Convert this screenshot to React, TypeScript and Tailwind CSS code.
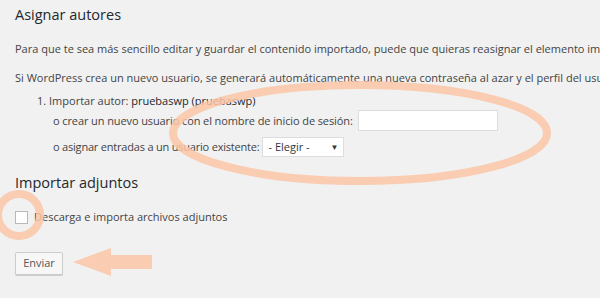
import React from "react";

const font = { fontFamily: '"Open Sans", "Noto Sans", sans-serif' };

function Annotations() {
  return (
    <svg
      className="pointer-events-none absolute inset-0"
      width="600"
      height="298"
      viewBox="0 0 600 298"
    >
      <g opacity="0.85">
        <ellipse cx="360" cy="133" rx="187" ry="48" fill="none" stroke="#fcc6a6" strokeWidth="8" />
        <circle cx="19" cy="215" r="21" fill="none" stroke="#fcc6a6" strokeWidth="8" />
        <path d="M73 262 L111 248 L111 255 L152 255 L152 269 L111 269 L111 276 Z" fill="#fcc6a6" />
      </g>
    </svg>
  );
}

export default function App() {
  return (
    <div
      className="relative h-[298px] w-[600px] overflow-hidden bg-[#f1f1f1] text-[#444]"
      style={font}
    >
      <div className="pl-[15px] pt-[4px]">
        <h2 className="text-[14.5px] leading-[22px] font-normal text-[#23282d]">Asignar autores</h2>

        <p className="mt-[15px] whitespace-nowrap text-[11px] leading-[16px]">
          Para que te sea más sencillo editar y guardar el contenido importado, puede que quieras reasignar el elemento importado a un usuario existente.
        </p>
        <p className="mt-[13px] whitespace-nowrap text-[11px] leading-[16px]">
          Si WordPress crea un nuevo usuario, se generará automáticamente una nueva contraseña al azar y el perfil del usuario se configurará como suscriptor.
        </p>

        <ol className="mt-[7px] pl-[22px] text-[11px]">
          <li className="leading-[16px]">
            1. Importar autor: <span className="text-[#23282d]">pruebaswp (pruebaswp)</span>
            <div className="flex flex-col pl-[16px]">
              <div className="flex h-[23px] items-center gap-[5px]">
                <span className="tracking-[-0.1px]">o crear un nuevo usuario con el nombre de inicio de sesión:</span>
                <span className="h-[21px] w-[140px] border border-[#ddd] bg-white" />
              </div>
              <div className="mt-[4px] flex h-[21px] items-center gap-[3px]">
                <span className="tracking-[-0.2px]">o asignar entradas a un usuario existente:</span>
                <span className="flex h-[20px] w-[82px] items-center justify-between border border-[#ddd] bg-white pl-[5px] pr-[5px] text-[11px] text-[#32373c]">
                  - Elegir -<span className="text-[8px]">▼</span>
                </span>
              </div>
            </div>
          </li>
        </ol>

        <h2 className="mt-[15px] text-[14.5px] leading-[22px] font-normal text-[#23282d]">Importar adjuntos</h2>

        <label className="mt-[15px] flex items-center gap-[6px] text-[11px] leading-[16px]">
          <span className="h-[13px] w-[13px] border border-[#b4b9be] bg-white" />
          Descarga e importa archivos adjuntos
        </label>

        <button className="mt-[27px] h-[23px] w-[48px] rounded-[2px] border border-[#ccc] bg-[#f7f7f7] text-[11px] text-[#555] shadow-[0_1px_0_#ccc]">
          Enviar
        </button>
      </div>
      <Annotations />
    </div>
  );
}
